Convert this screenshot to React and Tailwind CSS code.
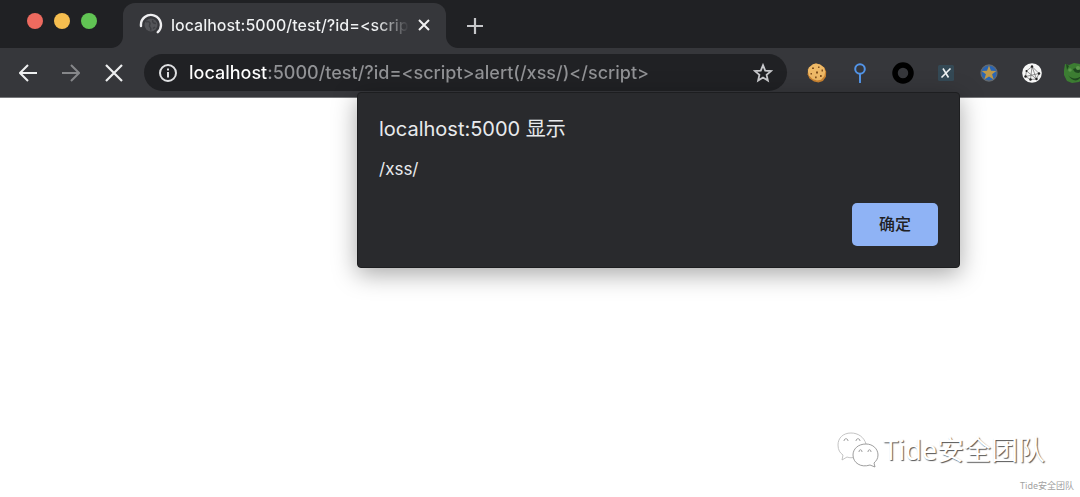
import React from "react";

function BrowserTab() {
  return (
    <div className="relative flex h-[45px] w-[323px] items-center rounded-t-xl bg-[#36373b] pb-px pl-4">
      <svg className="absolute bottom-0 -left-3 size-3" viewBox="0 0 12 12" aria-hidden="true">
        <path d="M12 0v12H0C6.6 12 12 6.6 12 0Z" fill="#36373b" />
      </svg>
      <svg className="absolute bottom-0 -right-3 size-3" viewBox="0 0 12 12" aria-hidden="true">
        <path d="M0 0v12h12C5.4 12 0 6.6 0 0Z" fill="#36373b" />
      </svg>
      <svg className="size-6 shrink-0" viewBox="0 0 24 24" fill="none" aria-hidden="true">
        <circle cx="12" cy="12" r="6.5" fill="#535458" />
        <path d="M7 9c2.500-1 4 0 4 1.500S9.500 13 11 14s1 2 .5 3.500M14 7c-1 1.500 0 3.500 3 3.500M14 15.500l2-1.500" stroke="#3d3e42" strokeWidth="1.500" />
        <path d="M2 13A10 10 0 1 1 18.800 19.200" stroke="#eeeef0" strokeWidth="2.400" strokeLinecap="round" />
      </svg>
      <span className="ml-2 w-[238px] overflow-hidden bg-[linear-gradient(to_right,#f1f3f4_205px,#36373b_238px)] bg-clip-text text-base font-medium whitespace-nowrap text-transparent">
        localhost:5000/test/?id=&lt;script
      </span>
      <button aria-label="Close tab" className="ml-[3px] flex size-6 shrink-0 items-center justify-center">
        <svg className="size-3" viewBox="0 0 12 12" stroke="#f1f1f2" strokeWidth="2" aria-hidden="true">
          <path d="M1 1l10 10M11 1L1 11" />
        </svg>
      </button>
    </div>
  );
}

function TabStrip() {
  return (
    <header className="flex h-12 items-end bg-[#202124]">
      <div className="flex w-[123px] shrink-0 gap-[11px] self-start pt-[13px] pl-[27px]">
        <button aria-label="Close window" className="size-4 rounded-full bg-[#ed6a5f]" />
        <button aria-label="Minimize window" className="size-4 rounded-full bg-[#f5bd4f]" />
        <button aria-label="Zoom window" className="size-4 rounded-full bg-[#61c454]" />
      </div>
      <BrowserTab />
      <button aria-label="New tab" className="ml-[17px] flex h-[45px] w-6 items-center justify-center">
        <svg className="size-4" viewBox="0 0 16 16" stroke="#c6c7ca" strokeWidth="2.200" aria-hidden="true">
          <path d="M8 0v16M0 8h16" />
        </svg>
      </button>
    </header>
  );
}

function ToolButton({ label, children }) {
  return (
    <button aria-label={label} className="flex h-9 w-[43px] shrink-0 items-center justify-center">
      {children}
    </button>
  );
}

function Toolbar() {
  return (
    <div className="flex h-[50px] items-center border-b border-[#77787b] bg-[#36373b]">
      <nav className="flex w-36 shrink-0 pl-1.5">
        <ToolButton label="Back">
          <svg className="size-[18px]" viewBox="0 0 18 18" fill="none" stroke="#eeeff0" strokeWidth="2" aria-hidden="true">
            <path d="M18 9H1.500M9 1L1 9l8 8" />
          </svg>
        </ToolButton>
        <ToolButton label="Forward">
          <svg className="size-[18px]" viewBox="0 0 18 18" fill="none" stroke="#86878a" strokeWidth="2" aria-hidden="true">
            <path d="M0 9h16.500M9 1l8 8-8 8" />
          </svg>
        </ToolButton>
        <ToolButton label="Stop loading">
          <svg className="size-[18px]" viewBox="0 0 18 18" stroke="#eeeff0" strokeWidth="2.200" aria-hidden="true">
            <path d="M1 1l16 16M17 1L1 17" />
          </svg>
        </ToolButton>
      </nav>
      <div className="flex h-[37px] min-w-0 flex-1 items-center rounded-full bg-[#202124] px-[14px]">
        <button aria-label="Site information" className="size-5 shrink-0">
          <svg className="size-5" viewBox="0 0 20 20" fill="none" stroke="#dfe0e2" strokeWidth="2" aria-hidden="true">
            <circle cx="10" cy="10" r="8" />
            <path d="M10 9v5.500M10 5.500v2" />
          </svg>
        </button>
        <input
          aria-label="Address"
          defaultValue="localhost:5000/test/?id=<script>alert(/xss/)</script>"
          className="ml-[11px] min-w-0 flex-1 bg-[linear-gradient(to_right,#ffffff_79px,#919295_79px)] bg-clip-text text-lg leading-6 font-medium text-transparent outline-none"
        />
        <button aria-label="Bookmark this page" className="size-5 shrink-0">
          <svg className="size-5" viewBox="0 0 20 20" fill="none" stroke="#c8c9cc" strokeWidth="1.800" aria-hidden="true">
            <path d="M10 2.200l2.200 5.400 5.800.5-4.400 3.800 1.300 5.700-4.900-3-4.900 3 1.300-5.700L2 8.100l5.800-.5z" />
          </svg>
        </button>
      </div>
      <div className="flex w-[293px] shrink-0 overflow-hidden pl-2">
        <ToolButton label="Cookies">
          <svg className="size-5" viewBox="0 0 20 20" aria-hidden="true">
            <path d="M6 1.200l3-.6 4 .9 4.500 3.200 1.700 4-.3 5-3 4.200-4.400 1.700-4.500-1-4.500-3L.6 11.300l.6-5z" fill="#c98331" />
            <path d="M6 1.200l3-.6 4 .9 4 3 1.200 4-.8 4.500-3.400 3.800-4 .7L5.500 16 2 12.500.8 8l1-3.500z" fill="#eeb967" />
            <path d="M5 4.500h2v1.500H5zM11 3.500h1.500V5H11zM14.500 6.500H16v2h-1.500zM3.500 10H5v1.500H3.500zM9 8.500h2v2H9zM13 12h1.700v2H13zM8 13.500h1.700v1.700H8z" fill="#80501f" />
          </svg>
        </ToolButton>
        <ToolButton label="Pin">
          <svg className="h-5 w-3" viewBox="0 0 12 20" fill="none" stroke="#5294e8" strokeWidth="2" aria-hidden="true">
            <circle cx="6" cy="6" r="4.800" />
            <path d="M6 11v9" />
          </svg>
        </ToolButton>
        <ToolButton label="Ring">
          <svg className="size-[22px]" viewBox="0 0 22 22" fill="none" aria-hidden="true">
            <circle cx="11" cy="11" r="8" stroke="#000000" strokeWidth="5.500" />
          </svg>
        </ToolButton>
        <ToolButton label="X path">
          <svg className="size-4" viewBox="0 0 16 16" fill="none" aria-hidden="true">
            <rect width="16" height="16" rx="1.500" fill="#344955" />
            <path d="M5 3.500l5.500 9M12.500 3.500L3.500 12.500" stroke="#f0f2f3" strokeWidth="1.600" />
          </svg>
        </ToolButton>
        <ToolButton label="Star">
          <svg className="size-[18px]" viewBox="0 0 18 18" aria-hidden="true">
            <circle cx="9" cy="9" r="8" fill="#2965b5" stroke="#626970" strokeWidth="1.300" />
            <path d="M9 1.500l2 5.200 5.300.3-4.200 3.300 1.600 5.200L9 12.500l-4.700 3 1.600-5.200L1.700 7l5.300-.3z" fill="#bd9849" />
          </svg>
        </ToolButton>
        <ToolButton label="Network">
          <svg className="size-5" viewBox="0 0 20 20" aria-hidden="true">
            <circle cx="10" cy="10" r="9.800" fill="#f6f6f6" />
            <path d="M10 3.500L4.500 8 3.500 13.500l5 3 6-.5 2.500-5.500zM10 3.500L14.500 16M4.500 8l10 8M3.500 13.500L17 10.500M10 3.500l-1.500 13" fill="none" stroke="#666666" strokeWidth=".7" />
            <g fill="#202020">
              <circle cx="10" cy="3.500" r="1.200" />
              <circle cx="4.500" cy="8" r="1" />
              <circle cx="3.500" cy="13.500" r="1.200" />
              <circle cx="8.500" cy="16.500" r="1.200" />
              <circle cx="14.500" cy="16" r="1.200" />
              <circle cx="17" cy="10.500" r="1.200" />
            </g>
          </svg>
        </ToolButton>
        <ToolButton label="Monster">
          <svg className="size-[22px]" viewBox="0 0 22 22" aria-hidden="true">
            <path d="M1 2l4 1 5-2 6 1 4 4v10l-5 4-7 1-5-2-3-6V8z" fill="#3c7d32" />
            <path d="M2 2l3 2-2 4zM9 7c3-2 6 0 8 2l-2 2c-3 0-5-1-6-4zM4 13c3 4 9 5 13 1-2 6-9 6-13-1z" fill="#1f4820" />
            <circle cx="6" cy="8" r="1.800" fill="#5b984b" />
            <circle cx="14" cy="6" r="2" fill="#5b984b" />
          </svg>
        </ToolButton>
      </div>
    </div>
  );
}

function AlertDialog() {
  return (
    <div
      role="alertdialog"
      aria-labelledby="alert-title"
      aria-describedby="alert-text"
      className="absolute top-[92px] left-[357px] flex w-[603px] flex-col rounded border border-[#1d1e20] bg-[#292a2d] px-[21px] pt-[22px] pb-[21px] text-[#e8eaed] shadow-[0_6px_24px_rgba(0,0,0,0.35)]"
    >
      <h1 id="alert-title" className="text-xl leading-7">localhost:5000 显示</h1>
      <p id="alert-text" className="mt-3 text-[17px] leading-7">/xss/</p>
      <button className="mt-5 h-[43px] w-[86px] self-end rounded-[5px] bg-[#8fb3f5] pb-px text-base font-medium text-[#202124]">
        确定
      </button>
    </div>
  );
}

function Watermark() {
  return (
    <footer className="flex flex-col items-end pr-[6px] pb-[5px]">
      <div className="mr-[29px] flex items-center gap-1 font-['Noto_Sans','Noto_Sans_CJK_SC',sans-serif] text-[27px] leading-9 text-white [text-shadow:1px_1px_1px_#555555]">
        <svg className="h-9 w-[42px]" viewBox="0 0 42 36" fill="#ffffff" stroke="#858585" strokeWidth=".8" aria-hidden="true">
          <path d="M29 12C27 5 21 1 14 1 6 1 1 6 1 13c0 5 2 8 5 10l-1 5 5-3c3 1 5 1 8 0" stroke="#b5b5b5" />
          <path d="M29 12c7 0 12 5 12 11 0 4-2 6-4 8l1 4-5-2c-9 3-17-2-17-10 0-6 5-11 13-11Z" />
          <path d="M7 9c0-3 4-3 4 0M19 9c0-3 4-3 4 0M22 20c0-3 3-3 3 0M31 20c0-3 3-3 3 0" fill="none" />
        </svg>
        <span>Tide安全团队</span>
      </div>
      <small className="mt-3 font-['Noto_Sans','Noto_Sans_CJK_SC',sans-serif] text-[9px] leading-3 text-[#a2a2a2]">
        Tide安全团队
      </small>
    </footer>
  );
}

export default function App() {
  return (
    <div className="relative flex min-h-screen flex-col overflow-hidden bg-white font-['Inter','Noto_Sans_CJK_SC',sans-serif]">
      <TabStrip />
      <Toolbar />
      <main className="flex-1">
        <AlertDialog />
      </main>
      <Watermark />
    </div>
  );
}
